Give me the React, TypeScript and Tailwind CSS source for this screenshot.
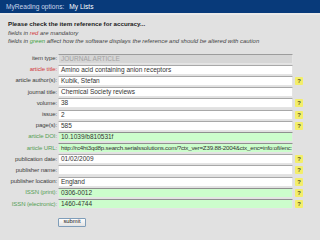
import type { ReactNode } from 'react';

type Field = {
    label: string;
    value: string;
    tone?: 'red' | 'green' | 'locked';
    help?: boolean;
    tight?: boolean;
};

const fields: Field[] = [
    { label: 'item type:', value: 'JOURNAL ARTICLE', tone: 'locked' },
    { label: 'article title:', value: 'Amino acid containing anion receptors', tone: 'red' },
    { label: 'article author(s):', value: 'Kubik, Stefan', help: true },
    { label: 'journal title:', value: 'Chemical Society reviews' },
    { label: 'volume:', value: '38', help: true },
    { label: 'issue:', value: '2', help: true },
    { label: 'page(s):', value: '585', help: true },
    { label: 'article DOI:', value: '10.1039/b810531f', tone: 'green' },
    {
        label: 'article URL:',
        value: 'http://rc4ht3qd8p.search.serialssolutions.com/?ctx_ver=Z39.88-2004&ctx_enc=info:ofi/enc:',
        tone: 'green',
        tight: true,
    },
    { label: 'publication date:', value: '01/02/2009', help: true },
    { label: 'publisher name:', value: '', help: true },
    { label: 'publisher location:', value: 'England', help: true },
    { label: 'ISSN (print):', value: '0306-0012', tone: 'green', help: true },
    { label: 'ISSN (electronic):', value: '1460-4744', tone: 'green', help: true },
];

function Help() {
    return (
        <span className="ml-[2px] flex h-[8px] w-[8px] items-center justify-center rounded-[1px] bg-[#f3ee6a] text-[6px] font-bold leading-none text-[#5a5420]">
            ?
        </span>
    );
}

function Row({ field }: { field: Field }) {
    const labelColor =
        field.tone === 'red'
            ? 'text-[#d23a3a]'
            : field.tone === 'green'
              ? 'text-[#55a055]'
              : 'text-[#3c3c3c]';
    const box =
        field.tone === 'locked'
            ? 'bg-[#d6d6d6] text-[#a3a3a3] border-t-[#9c9c9c]'
            : field.tone === 'green'
              ? 'bg-[#ccfdcc] text-[#333] border-t-[#8f8f8f]'
              : 'bg-white text-[#333] border-t-[#a8a8a8]';

    return (
        <div className="flex h-[11.2px] items-center">
            <span className={`w-[58px] shrink-0 pr-[1px] text-right text-[6px] tracking-[-0.1px] ${labelColor}`}>
                {field.label}
            </span>
            <div
                className={`flex h-[10px] w-[235px] shrink-0 items-center overflow-hidden whitespace-nowrap border border-[#e4e4e4] pl-[2px] ${field.tight ? 'text-[6.2px] tracking-[-0.2px]' : 'text-[6.5px]'} ${box}`}
            >
                {field.value}
            </div>
            {field.help && <Help />}
        </div>
    );
}

function Note({ children }: { children: ReactNode }) {
    return <p className="h-[8.5px] leading-[8.5px] italic text-[#444]">{children}</p>;
}

export default function App() {
    return (
        <div className="h-[240px] w-[320px] overflow-hidden bg-[#e1e1e1] font-['Liberation_Sans',sans-serif] text-[5.95px]">
            <div className="flex h-[13px] items-center gap-[5px] bg-[#083a7a] pl-[6px] text-[6.6px]">
                <span className="text-[#c9d5ea]">MyReading options:</span>
                <span className="text-white">My Lists</span>
            </div>
            <div className="h-[2px] bg-[#e9e9e9]" />

            <div className="pl-[8px] pt-[5px]">
                <p className="h-[8.5px] text-[6.2px] font-bold leading-[8.5px] text-[#1a1a1a]">
                    Please check the item reference for accuracy...
                </p>
                <Note>
                    fields in <span className="text-[#d23a3a]">red</span> are mandatory
                </Note>
                <Note>
                    fields in <span className="text-[#3da13d]">green</span> affect how the
                    software displays the reference and should be altered with caution
                </Note>
            </div>

            <div className="mt-[7.5px] flex flex-col">
                {fields.map((f) => (
                    <Row key={f.label} field={f} />
                ))}
            </div>

            <div className="mt-[7.5px] pl-[58px]">
                <button className="h-[9px] w-[28px] rounded-[1px] border border-[#7f9db9] bg-[linear-gradient(#fdfdfd,#e3e3e3)] text-[5.8px] leading-none text-[#111]">
                    submit
                </button>
            </div>
        </div>
    );
}
